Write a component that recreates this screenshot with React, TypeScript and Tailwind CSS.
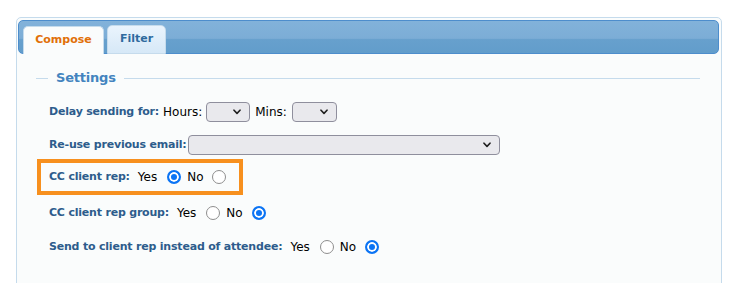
import React from "react";

const font = { fontFamily: '"DejaVu Sans", Verdana, sans-serif' };

function Select({ width }: { width: string }) {
  return (
    <div
      className={`${width} h-[20px] rounded-[4px] border border-[#8f8f9d] bg-[#e9e9ed] flex items-center justify-end pr-[8px]`}
    >
      <svg width="8" height="6" viewBox="0 0 8 6" fill="none">
        <path d="M1 1.2 4 4.4 7 1.2" stroke="#1f1f1f" strokeWidth="1.6" strokeLinecap="round" strokeLinejoin="round" />
      </svg>
    </div>
  );
}

function Radio({ checked, name }: { checked: boolean; name: string }) {
  return (
    <input
      type="radio"
      name={name}
      defaultChecked={checked}
      className="appearance-none m-0 w-[14px] h-[14px] shrink-0 rounded-full border border-[#8e8e8e] bg-white checked:border-2 checked:border-[#0b74f4] checked:bg-[#0b74f4] checked:shadow-[inset_0_0_0_2px_white]"
    />
  );
}

function YesNo({ name, yes }: { name: string; yes: boolean }) {
  return (
    <div className="flex items-center text-[12px] text-black">
      <span className="ml-[8px]">Yes</span>
      <span className="ml-[10px] flex"><Radio name={name} checked={yes} /></span>
      <span className="ml-[6px]">No</span>
      <span className="ml-[9px] flex"><Radio name={name} checked={!yes} /></span>
    </div>
  );
}

function Label({ children }: { children: React.ReactNode }) {
  return (
    <span className="text-[11px] font-bold tracking-[-0.2px] text-[#2d5c8c] whitespace-nowrap">
      {children}
    </span>
  );
}

export default function App() {
  return (
    <div className="w-[745px] h-[283px] overflow-hidden bg-white pt-[17px] pl-[16px]" style={font}>
      <div className="w-[706px] h-[290px] rounded-[5px] border border-[#c5dbec] bg-[#fafcfc] pt-[2px] pl-[1px] pr-[2px]">
        {/* tab header */}
        <div className="h-[34px] rounded-[5px] border border-[#4d8dcc] bg-[linear-gradient(to_bottom,#82b2da_0%,#7cadd6_54%,#67a0cd_58%,#629dcb_100%)] flex items-end pl-[4px] gap-[3px]">
          <div className="-mb-px h-[28px] w-[81px] rounded-t-[5px] border border-b-0 border-[#c5dbec] bg-[#fafcfc] flex items-center justify-center text-[11px] font-bold text-[#e17009]">
            Compose
          </div>
          <div className="-mb-px h-[29px] w-[59px] rounded-t-[5px] border border-[#c5dbec] bg-[linear-gradient(to_bottom,#eaf4fd,#d6e8f7)] flex items-center justify-center text-[11px] font-bold text-[#2e6a9e]">
            Filter
          </div>
        </div>

        {/* settings fieldset */}
        <div className="mt-[16px] h-[16px] flex items-center pl-[18px] pr-[19px]">
          <div className="w-[12px] h-px bg-[#c5dbec]" />
          <span className="px-[8px] text-[13px] font-bold tracking-[-0.2px] text-[#4384bf]">Settings</span>
          <div className="flex-1 h-px bg-[#c5dbec]" />
        </div>

        <div className="pl-[31px] flex flex-col items-start">
          <div className="mt-[16px] h-[20px] flex items-center">
            <Label>Delay sending for:</Label>
            <span className="ml-[4px] text-[12px] text-black">Hours:</span>
            <span className="ml-[4px]"><Select width="w-[44px]" /></span>
            <span className="ml-[5px] text-[12px] text-black">Mins:</span>
            <span className="ml-[5px]"><Select width="w-[45px]" /></span>
          </div>

          <div className="mt-[13px] h-[20px] flex items-center">
            <Label>Re-use previous email:</Label>
            <span className="ml-[1px]"><Select width="w-[312px]" /></span>
          </div>

          <div className="mt-[4px] -ml-[12px] w-[206px] h-[36px] border-4 border-[#f7901e] pl-[8px] flex items-center">
            <Label>CC client rep:</Label>
            <YesNo name="ccrep" yes={true} />
          </div>

          <div className="mt-[8px] h-[20px] flex items-center">
            <Label>CC client rep group:</Label>
            <YesNo name="ccgroup" yes={false} />
          </div>

          <div className="mt-[14px] h-[20px] flex items-center">
            <Label>Send to client rep instead of attendee:</Label>
            <YesNo name="sendrep" yes={false} />
          </div>
        </div>
      </div>
    </div>
  );
}
